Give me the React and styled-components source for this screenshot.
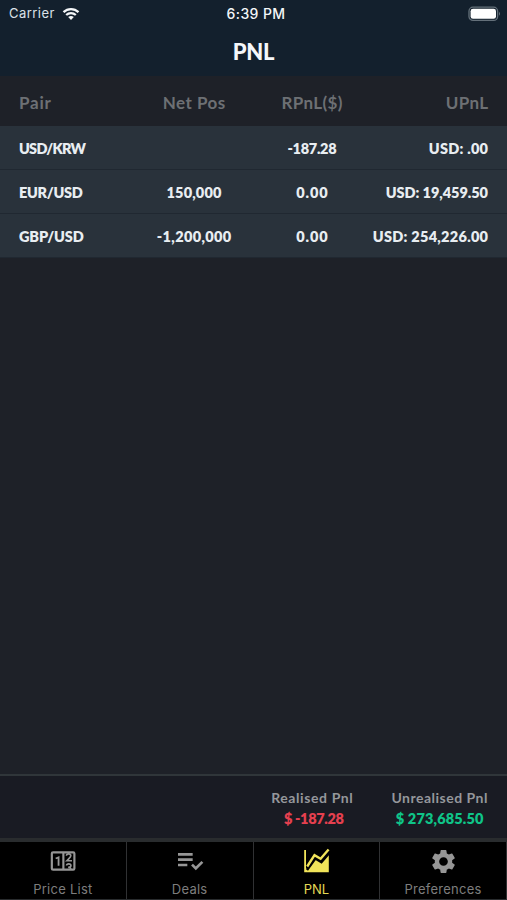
import React from "react";
import styled, { createGlobalStyle } from "styled-components";
import { MdPlaylistAddCheck, MdSettings } from "react-icons/md";

const GlobalStyle = createGlobalStyle`
  * {
    box-sizing: border-box;
  }

  body {
    margin: 0;
    background: #1e2128;
  }
`;

const Screen = styled.div`
  display: flex;
  flex-direction: column;
  width: 507px;
  height: 900px;
  overflow: hidden;
  background: #1e2128;
  color: #e8edf1;
  font-family: Lato, "Liberation Sans", sans-serif;
  white-space: nowrap;
`;

const TopBar = styled.header`
  height: 76px;
  background: #13202d;
`;

const StatusBar = styled.div`
  display: grid;
  grid-template-columns: 1fr auto 1fr;
  align-items: center;
  height: 27px;
  padding: 0 6px 0 9px;
  font-family: Inter, sans-serif;
  font-size: 13px;
  line-height: 27px;
`;

const Carrier = styled.div`
  display: flex;
  align-items: center;
  gap: 7px;
  color: #dce2e8;
  letter-spacing: 0.45px;
`;

const Clock = styled.div`
  padding: 1px 0 0 2px;
  color: #f4f6f8;
  font-size: 14px;
  font-weight: 500;
  letter-spacing: 0.4px;
  line-height: 26px;
`;

const BatteryIcon = styled.svg`
  justify-self: end;
`;

const Title = styled.h1`
  margin: 0;
  color: #f5f7fa;
  font-size: 22px;
  font-weight: 900;
  letter-spacing: -0.3px;
  line-height: 50px;
  text-align: center;
`;

const Row = styled.div`
  display: grid;
  grid-template-columns: 116px 118px 118px 1fr;
  align-items: center;
  height: 44px;
  padding: 1px 19px 0;
  border-bottom: 1px solid #202831;
  background: #29323b;
`;

const HeaderRow = styled(Row)`
  height: 50px;
  padding-top: 3px;
  border-bottom: 0;
  background: #1e2128;
`;

const Cell = styled.div`
  margin-right: ${({ $spacing }) => -($spacing || 0)}px;
  font-size: 14.5px;
  font-weight: 800;
  letter-spacing: ${({ $spacing }) => $spacing || 0}px;
  text-align: ${({ $align }) => $align || "left"};
`;

const HeaderCell = styled(Cell)`
  color: #6d7074;
  font-size: 17px;
  font-weight: 700;
`;

const Content = styled.main`
  flex: 1;
`;

const Totals = styled.section`
  display: flex;
  justify-content: flex-end;
  gap: 38px;
  height: 64px;
  padding: 11px 19px 0;
  border-top: 2px solid #30363a;
  background: #191b23;
`;

const Total = styled.div`
  text-align: center;
`;

const TotalLabel = styled.div`
  color: #95979b;
  font-size: 14px;
  font-weight: 700;
  letter-spacing: ${({ $spacing }) => $spacing}px;
  line-height: 21px;
`;

const TotalValue = styled.div`
  padding-left: ${({ $negative }) => ($negative ? 3 : 0)}px;
  color: ${({ $negative }) => ($negative ? "#e5404f" : "#0fc488")};
  font-size: 14.5px;
  font-weight: 800;
  letter-spacing: ${({ $spacing }) => $spacing}px;
  line-height: 21px;
`;

const TabBar = styled.nav`
  display: grid;
  grid-template-columns: repeat(4, 1fr);
  height: 62px;
  border-top: 4px solid #292c2e;
  border-bottom: 1px solid #292c2e;
  background: #000;
`;

const Tab = styled.button`
  display: flex;
  flex-direction: column;
  align-items: center;
  padding: 4px 0 0;
  border: 0;
  border-right: 1px solid #303133;
  background: none;
  color: ${({ $active }) => ($active ? "#f1e45a" : "#969696")};

  svg {
    display: block;
  }
`;

const TabIcon = styled.span`
  display: flex;
  align-items: center;
  justify-content: center;
  height: 30px;
  margin-bottom: 4px;
`;

const TabLabel = styled.span`
  color: ${({ $active }) => ($active ? "#e4d955" : "#7d7d7d")};
  font-family: Inter, sans-serif;
  font-size: 13px;
  letter-spacing: ${({ $spacing }) => $spacing}px;
  line-height: 18px;
`;

const WifiIcon = () => (
  <svg width="18" height="14" viewBox="0 0 18 14" fill="none">
    <path
      d="M1.5 5.1C5.7 1 12.3 1 16.5 5.1M4.2 8C6.9 5.4 11.1 5.4 13.8 8"
      stroke="#f4f6f8"
      strokeWidth="2.2"
    />
    <path d="M6.2 10.1q2.8-2.3 5.6 0L9 13z" fill="#f4f6f8" />
  </svg>
);

const Battery = () => (
  <BatteryIcon width="33" height="16" viewBox="0 0 33 16">
    <rect x="1" y="1.2" width="28.6" height="13.2" rx="4" fill="none" stroke="#64707a" strokeWidth="1.3" />
    <rect x="2.6" y="2.8" width="25.4" height="10" rx="2.4" fill="#fff" />
    <path d="M31 5.8q2 2 0 4z" fill="#64707a" />
  </BatteryIcon>
);

const CounterIcon = () => (
  <svg width="30" height="29" viewBox="0 0 25 24" fill="none" stroke="currentColor">
    <rect x="3.2" y="4.4" width="18.8" height="14.4" rx="1" strokeWidth="1.8" />
    <path d="M12.8 4.4v14.4" strokeWidth="1.8" />
    <path d="M6.4 9.5l2.4-.9v7" strokeWidth="1.5" />
    <path d="M15.4 7.2c0-2.2 3.6-2 3.6.1 0 1.2-1.6 2.3-3.3 4.1H20" strokeWidth="1.4" />
    <path d="M15.5 15.4c0-1.9 3.6-1.9 3.6 0 0 1.2-.7 1.5-2.3 1.5 1.2 0 2 .3 2.4 1.2" strokeWidth="1.4" />
  </svg>
);

const ChartIcon = () => (
  <svg width="28" height="30" viewBox="0 0 28 30" fill="none">
    <path
      d="M2.2 4H4v18.6h1.2L13.2 12l6.2 3.7L26.8 8v18.3H2.2z"
      fill="currentColor"
    />
    <path d="M5 24l8.3-11.6 6.1 3.7L27.2 7" stroke="#000" strokeWidth="2.5" />
    <path d="M5.2 20.5l7.3-11.3 6.1 3.6 8-9.3" stroke="currentColor" strokeWidth="2.4" />
  </svg>
);

const positions = [
  {
    pair: { text: "USD/KRW", spacing: -0.75 },
    net: { text: "" },
    realised: { text: "-187.28", spacing: -0.3 },
    unrealised: { text: "USD: .00", spacing: 0.25 },
  },
  {
    pair: { text: "EUR/USD", spacing: -0.3 },
    net: { text: "150,000", spacing: 0.15 },
    realised: { text: "0.00", spacing: 0.9 },
    unrealised: { text: "USD: 19,459.50", spacing: -0.05 },
  },
  {
    pair: { text: "GBP/USD", spacing: -0.15 },
    net: { text: "-1,200,000", spacing: 0.35 },
    realised: { text: "0.00", spacing: 0.9 },
    unrealised: { text: "USD: 254,226.00", spacing: 0.27 },
  },
];

const tabs = [
  { label: "Price List", icon: <CounterIcon />, spacing: 0.25 },
  { label: "Deals", icon: <MdPlaylistAddCheck size={32} />, spacing: 0.25 },
  { label: "PNL", icon: <ChartIcon />, spacing: 0, active: true },
  { label: "Preferences", icon: <MdSettings size={29} />, spacing: 0.25 },
];

const App = () => (
  <Screen>
    <GlobalStyle />
    <TopBar>
      <StatusBar>
        <Carrier>
          Carrier
          <WifiIcon />
        </Carrier>
        <Clock>6:39 PM</Clock>
        <Battery />
      </StatusBar>
      <Title>PNL</Title>
    </TopBar>

    <Content>
      <HeaderRow>
        <HeaderCell $spacing={0.8}>Pair</HeaderCell>
        <HeaderCell $align="center" $spacing={0.45}>
          Net Pos
        </HeaderCell>
        <HeaderCell $align="center" $spacing={0.35}>
          RPnL($)
        </HeaderCell>
        <HeaderCell $align="right" $spacing={0.35}>
          UPnL
        </HeaderCell>
      </HeaderRow>
      {positions.map(({ pair, net, realised, unrealised }) => (
        <Row key={pair.text}>
          <Cell $spacing={pair.spacing}>{pair.text}</Cell>
          <Cell $align="center" $spacing={net.spacing}>
            {net.text}
          </Cell>
          <Cell $align="center" $spacing={realised.spacing}>
            {realised.text}
          </Cell>
          <Cell $align="right" $spacing={unrealised.spacing}>
            {unrealised.text}
          </Cell>
        </Row>
      ))}
    </Content>

    <Totals>
      <Total>
        <TotalLabel $spacing={0.6}>Realised Pnl</TotalLabel>
        <TotalValue $negative $spacing={-0.35}>
          $ -187.28
        </TotalValue>
      </Total>
      <Total>
        <TotalLabel $spacing={0.5}>Unrealised Pnl</TotalLabel>
        <TotalValue $spacing={0.15}>$ 273,685.50</TotalValue>
      </Total>
    </Totals>

    <TabBar>
      {tabs.map((tab) => (
        <Tab key={tab.label} $active={tab.active}>
          <TabIcon>{tab.icon}</TabIcon>
          <TabLabel $active={tab.active} $spacing={tab.spacing}>
            {tab.label}
          </TabLabel>
        </Tab>
      ))}
    </TabBar>
  </Screen>
);

export default App;
